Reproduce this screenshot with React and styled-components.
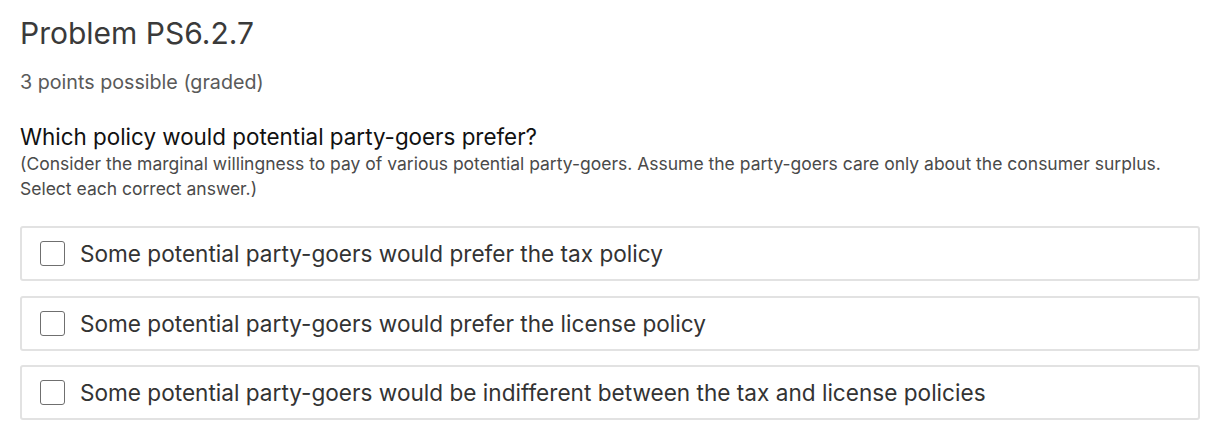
import styled, { createGlobalStyle } from 'styled-components'

const Global = createGlobalStyle`
    body {
        margin: 0;
        background: #fff;
        font-family: Inter, "Noto Sans", sans-serif;
    }
`;

const Page = styled.div`
    padding: 14px 28px 0 20px;
`;

const Title = styled.h2`
    margin: 0;
    font-size: 30px;
    font-weight: 400;
    line-height: 38px;
    color: #3a3a3a;
`;

const Points = styled.div`
    margin-top: 18px;
    font-size: 19.7px;
    line-height: 24px;
    color: #5a5a5a;
`;

const Question = styled.p`
    margin: 29px 0 0;
    font-size: 22.4px;
    line-height: 28px;
    color: #111;
`;

const Hint = styled.p`
    margin: 0;
    font-size: 17.5px;
    line-height: 25px;
    color: #4a4a4a;
`;

const Choices = styled.div`
    margin-top: 25px;
    display: flex;
    flex-direction: column;
    gap: 14.5px;
`;

const Choice = styled.label`
    display: flex;
    align-items: center;
    gap: 15px;
    height: 51px;
    padding: 0 18px;
    border: 2px solid #e2e2e2;
    border-radius: 3px;
    font-size: 22.6px;
    color: #333;
    cursor: pointer;
`;

const Box = styled.span`
    width: 23px;
    height: 23px;
    border: 1px solid #6f6f6f;
    border-radius: 3px;
    flex: none;
`;

const options = [
    'Some potential party-goers would prefer the tax policy',
    'Some potential party-goers would prefer the license policy',
    'Some potential party-goers would be indifferent between the tax and license policies',
];

export default function App() {
    return (
        <Page>
            <Global />
            <Title>Problem PS6.2.7</Title>
            <Points>3 points possible (graded)</Points>
            <Question>Which policy would potential party-goers prefer?</Question>
            <Hint>
                (Consider the marginal willingness to pay of various potential party-goers. Assume the party-goers care only about the consumer surplus.
                <br />
                Select each correct answer.)
            </Hint>
            <Choices>
                {options.map((o) => (
                    <Choice key={o}>
                        <Box />
                        {o}
                    </Choice>
                ))}
            </Choices>
        </Page>
    )
}
